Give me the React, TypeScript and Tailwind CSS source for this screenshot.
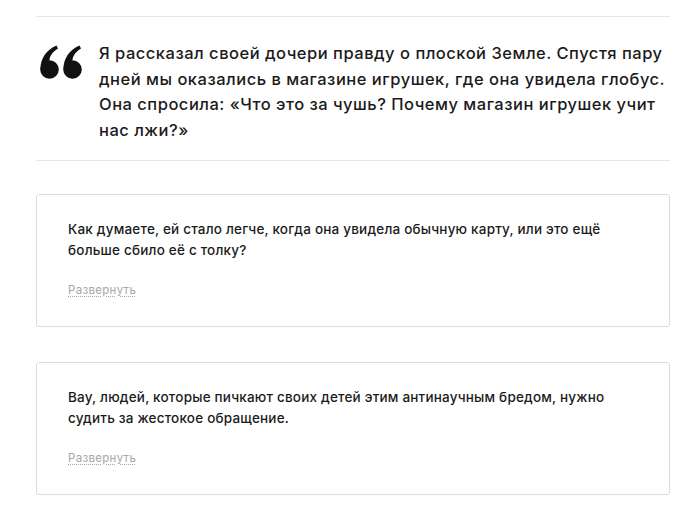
import React from "react";

const comments = [
  "Как думаете, ей стало легче, когда она увидела обычную карту, или это ещё больше сбило её с толку?",
  "Вау, людей, которые пичкают своих детей этим антинаучным бредом, нужно судить за жестокое обращение.",
];

function QuoteMark() {
  const one = "M0.5 24 C0.5 13 6.5 5 16.5 0.5 L18 3.5 C12.5 7 9.8 11 9.5 15 Z";
  return (
    <svg width="42" height="34" viewBox="0 0 42 34" className="shrink-0 mt-[4px]">
      <path d={one} fill="#111" />
      <circle cx="9.5" cy="24.5" r="9.3" fill="#111" />
      <g transform="translate(23 0)">
        <path d={one} fill="#111" />
        <circle cx="9.5" cy="24.5" r="9.3" fill="#111" />
      </g>
    </svg>
  );
}

export default function App() {
  return (
    <div
      className="w-[700px] h-[513px] bg-white pt-4 pl-9 pr-[30px] text-[#1b1b1b] overflow-hidden"
      style={{ fontFamily: "Inter, 'Noto Sans', sans-serif" }}
    >
      {/* Quote */}
      <div className="border-t border-b border-[#e6e7e8] flex gap-[17px] pl-1 pt-[24px] pb-[16px]">
        <QuoteMark />
        <p className="text-[16.5px] leading-[25.7px] tracking-[0.5px] font-medium w-[572px]">
          Я рассказал своей дочери правду о плоской Земле. Спустя пару дней мы оказались в магазине игрушек, где она увидела глобус. Она спросила: «Что это за чушь? Почему магазин игрушек учит нас лжи?»
        </p>
      </div>

      {/* Comments */}
      <div className="flex flex-col gap-[35px] mt-[33px]">
        {comments.map((c) => (
          <div key={c} className="border border-[#d9dbde] rounded-[3px] h-[133px] pl-[31px] pr-[40px] pt-[24px]">
            <p className="text-[13.5px] leading-[21px] tracking-[0.2px] font-medium">{c}</p>
            <button
              className="mt-[21px] text-[11.5px] tracking-[0.3px] text-[#a5a7aa] underline decoration-dotted underline-offset-2"
            >
              Развернуть
            </button>
          </div>
        ))}
      </div>
    </div>
  );
}
